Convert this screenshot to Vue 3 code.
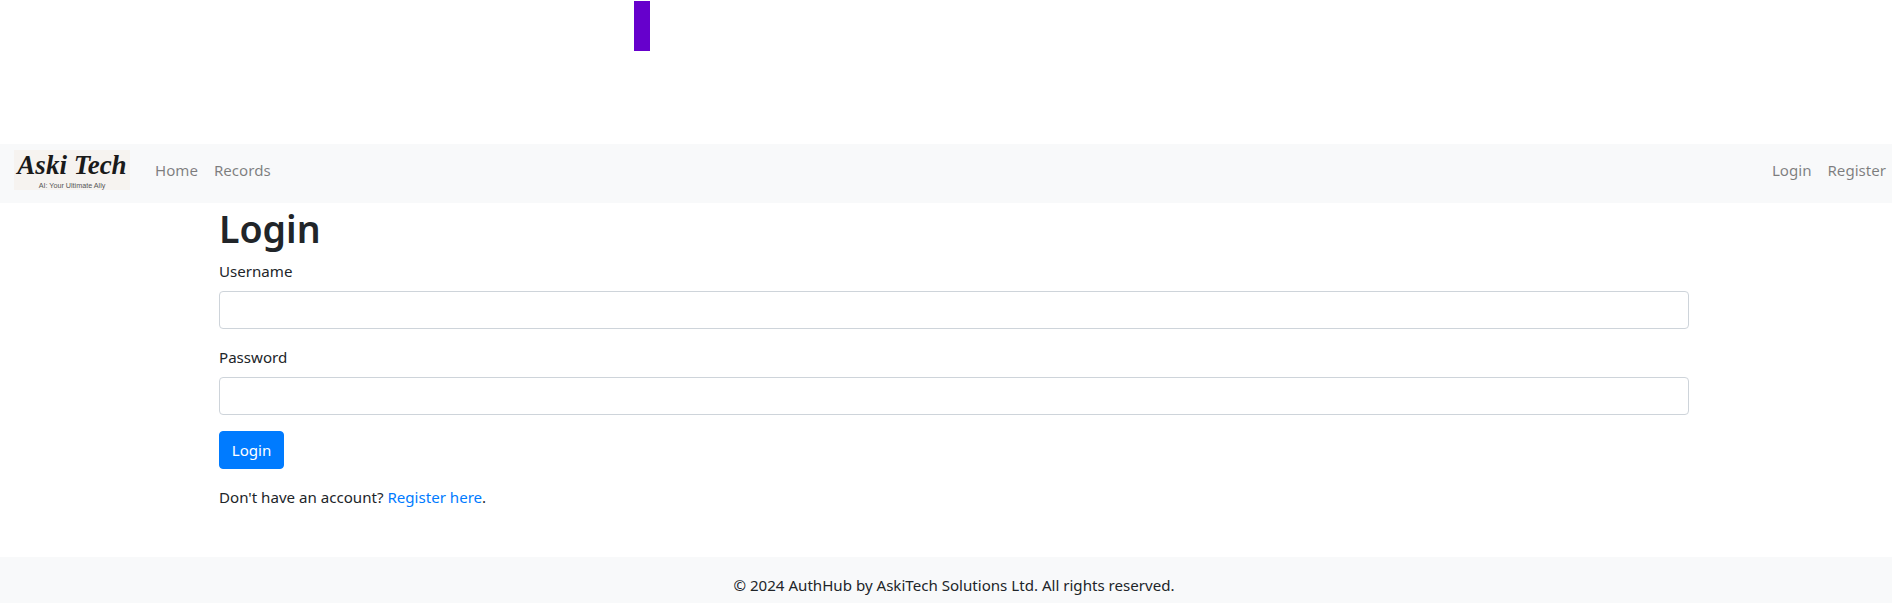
<script setup>
const leftLinks = ['Home', 'Records']
const rightLinks = ['Login', 'Register']
</script>

<template>
  <div class="page">
    <div class="top">
      <div class="bar"></div>
    </div>
    <nav class="navbar">
      <div class="logo">
        <span class="logo-name">Aski Tech</span>
        <span class="logo-tag">AI: Your Ultimate Ally</span>
      </div>
      <ul class="nav">
        <li v-for="l in leftLinks" :key="l"><a href="#" class="nav-link">{{ l }}</a></li>
      </ul>
      <ul class="nav nav-right">
        <li v-for="l in rightLinks" :key="l"><a href="#" class="nav-link">{{ l }}</a></li>
      </ul>
    </nav>
    <main class="container">
      <h1>Login</h1>
      <form @submit.prevent>
        <div class="group">
          <label for="username">Username</label>
          <input id="username" type="text" />
        </div>
        <div class="group">
          <label for="password">Password</label>
          <input id="password" type="password" />
        </div>
        <button type="submit" class="btn">Login</button>
      </form>
      <p class="hint">Don't have an account? <a href="#">Register here</a>.</p>
    </main>
    <footer class="footer">© 2024 AuthHub by AskiTech Solutions Ltd. All rights reserved.</footer>
  </div>
</template>

<style>
html, body { margin: 0; overflow: hidden; background: #fff; }
</style>

<style scoped>
.page {
  width: 1908px;
  height: 603px;
  overflow: hidden;
  font-family: "Noto Sans", "Open Sans", sans-serif;
  font-size: 15.1px;
  line-height: 24px;
  color: #212529;
}
.top { height: 144px; padding-top: 1px; padding-left: 634px; box-sizing: border-box; }
.bar { width: 16px; height: 50px; background: #6600cc; }
.navbar {
  display: flex;
  align-items: flex-start;
  height: 59px;
  box-sizing: border-box;
  padding: 6px 14px 0;
  background: #f8f9fa;
}
.logo {
  width: 116px;
  height: 40px;
  margin-right: 17px;
  background: #f6f3f0;
  display: flex;
  flex-direction: column;
  align-items: center;
  overflow: hidden;
  color: #1a1a1a;
}
.logo-name {
  font-family: "Liberation Serif", serif;
  font-style: italic;
  font-weight: 700;
  font-size: 27px;
  line-height: 31px;
  white-space: nowrap;
}
.logo-tag {
  font-family: "Liberation Sans", sans-serif;
  font-size: 7.2px;
  line-height: 9px;
  color: #555;
  white-space: nowrap;
}
.nav { display: flex; list-style: none; margin: 0; padding: 0; }
.nav-right { margin-left: auto; }
.nav-link { display: block; padding: 8px; color: rgba(0, 0, 0, 0.5); text-decoration: none; }
.container { width: 1500px; margin: 0 auto; padding: 0 15px; box-sizing: border-box; }
h1 { margin: 0 0 4px; font-size: 37.5px; font-weight: 600; line-height: 52px; }
.group { margin-bottom: 16px; }
label { display: block; margin-bottom: 8px; }
input {
  display: block;
  width: 100%;
  height: 38px;
  box-sizing: border-box;
  border: 1px solid #ced4da;
  border-radius: 4px;
  background: #fff;
  outline: none;
}
.btn {
  display: block;
  width: 65px;
  height: 38px;
  padding: 0;
  border: 1px solid #007bff;
  border-radius: 4px;
  background: #007bff;
  color: #fff;
  font: inherit;
}
.hint { margin: 16px 0 48px; }
.hint a { color: #007bff; text-decoration: none; }
.footer { height: 46px; padding-top: 16px; box-sizing: border-box; background: #f8f9fa; text-align: center; }
</style>
